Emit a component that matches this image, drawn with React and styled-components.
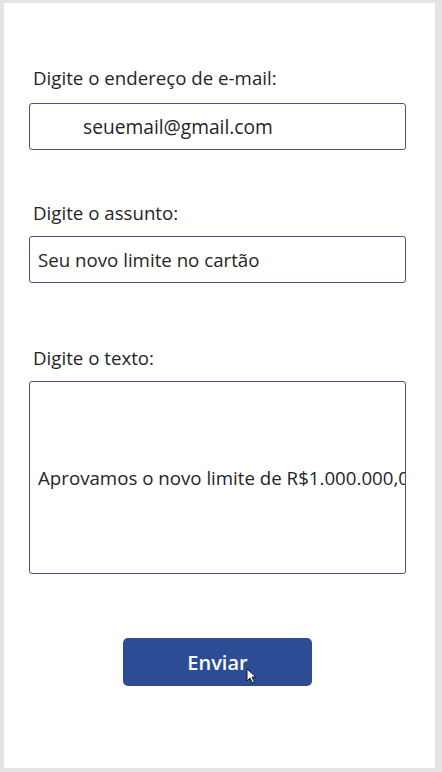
import React from "react";
import styled, { createGlobalStyle } from "styled-components";

const GlobalStyle = createGlobalStyle`
  html, body {
    margin: 0;
    padding: 0;
    background: #e4e4e4;
  }
  body {
    font-family: "Open Sans", "Noto Sans", sans-serif;
  }
`;

const Screen = styled.div`
  width: 442px;
  height: 772px;
  box-sizing: border-box;
  padding: 3px 7px 4px 4px;
  background: #e4e4e4;
`;

const Panel = styled.form`
  height: 100%;
  box-sizing: border-box;
  background: #ffffff;
  padding: 63px 0 0 25px;
  display: flex;
  flex-direction: column;
`;

const Field = styled.div`
  display: flex;
  flex-direction: column;
  margin-top: ${(p) => p.$top || 0}px;
`;

const Label = styled.label`
  font-size: 18.7px;
  line-height: 24px;
  color: #252525;
  padding-left: 4px;
  margin-bottom: ${(p) => p.$gap || 11}px;
`;

const Input = styled.div`
  width: 377px;
  height: ${(p) => p.$height || 47}px;
  box-sizing: border-box;
  border: 1px solid #52517e;
  border-radius: 3px;
  display: flex;
  align-items: center;
  padding-left: ${(p) => p.$indent || 8}px;
  font-size: ${(p) => p.$size || 18.7}px;
  color: #252525;
  white-space: nowrap;
  overflow: hidden;
`;

const ButtonRow = styled.div`
  margin-top: 64px;
  padding-left: 94px;
`;

const SendButton = styled.button`
  position: relative;
  width: 189px;
  height: 48px;
  border: none;
  border-radius: 5px;
  background: #2c4c96;
  color: #ffffff;
  font-family: "Open Sans", "Noto Sans", sans-serif;
  font-weight: 600;
  font-size: 20px;
  padding: 0 0 0 0;
  cursor: pointer;
`;

const Cursor = styled.svg`
  position: absolute;
  left: 123px;
  top: 30px;
`;

export default function App() {
  return (
    <>
      <GlobalStyle />
      <Screen>
        <Panel onSubmit={(e) => e.preventDefault()}>
          <Field>
            <Label $gap={13}>Digite o endereço de e-mail:</Label>
            <Input $indent={53} $size={19.2}>
              seuemail@gmail.com
            </Input>
          </Field>
          <Field $top={51}>
            <Label>Digite o assunto:</Label>
            <Input>Seu novo limite no cartão</Input>
          </Field>
          <Field $top={63}>
            <Label>Digite o texto:</Label>
            <Input $height={193}>
              Aprovamos o novo limite de R$1.000.000,00 para o seu cartão.
            </Input>
          </Field>
          <ButtonRow>
            <SendButton type="submit">
              Enviar
              <Cursor width="11" height="16" viewBox="0 0 11 16">
                <path
                  d="M1 1 L1 13 L4 10 L6.5 15 L8.5 14 L6 9 L10 9 Z"
                  fill="#ffffff"
                  stroke="#1a1a1a"
                  strokeWidth="1"
                  strokeLinejoin="round"
                />
              </Cursor>
            </SendButton>
          </ButtonRow>
        </Panel>
      </Screen>
    </>
  );
}
